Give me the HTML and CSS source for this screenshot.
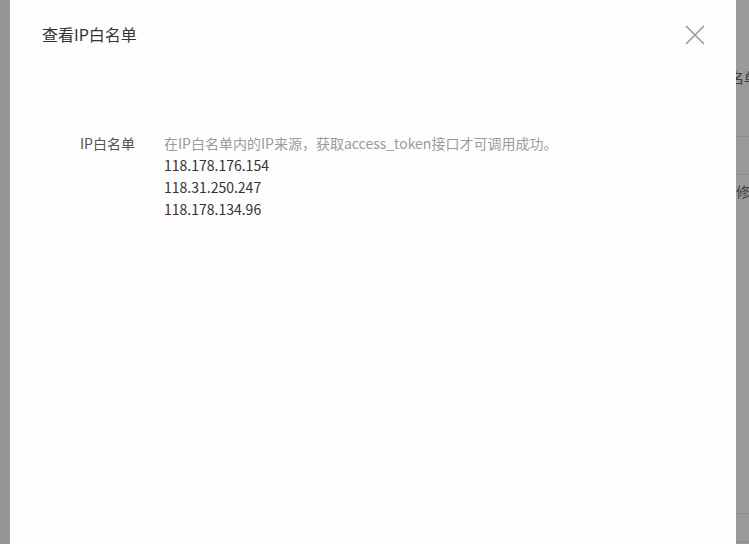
FILE: index.html
```html
<!DOCTYPE html>
<html lang="zh-CN">
<head>
<meta charset="utf-8">
<title>查看IP白名单</title>
<link rel="stylesheet" href="styles.css">
</head>
<body>
<div class="page">
  <div class="bg-col">
    <div class="bg-row bg-head">IP白名单</div>
    <div class="bg-row bg-line1"></div>
    <div class="bg-row bg-line2"></div>
    <div class="bg-row bg-action">修改</div>
    <div class="bg-row bg-line3"></div>
    <div class="bg-row bg-line4"></div>
  </div>
</div>
<div class="mask"></div>
<div class="modal">
  <div class="modal-header">
    <h2 class="modal-title">查看IP白名单</h2>
    <button class="close" aria-label="关闭">
      <svg width="20" height="20" viewBox="0 0 20 20"><path d="M1 1 L19 19 M19 1 L1 19" stroke="#9a9a9a" stroke-width="1.6" fill="none"/></svg>
    </button>
  </div>
  <div class="modal-body">
    <div class="form-row">
      <div class="label">IP白名单</div>
      <div class="value">
        <div class="hint">在IP白名单内的IP来源，获取access_token接口才可调用成功。</div>
        <div class="ip">118.178.176.154</div>
        <div class="ip">118.31.250.247</div>
        <div class="ip">118.178.134.96</div>
      </div>
    </div>
  </div>
</div>
</body>
</html>
```
FILE: styles.css
```css
html, body {
  margin: 0;
  padding: 0;
  width: 749px;
  height: 544px;
  overflow: hidden;
  font-family: "Noto Sans CJK SC", "Noto Sans", sans-serif;
}
body {
  background: #9a9a9a;
  position: relative;
}
.page {
  height: 544px;
  padding-left: 703px;
  box-sizing: border-box;
}
.bg-col {
  display: flex;
  flex-direction: column;
  color: #3a3a3a;
  font-size: 14px;
}
.bg-row {
  white-space: nowrap;
}
.bg-head {
  margin-top: 67px;
  height: 20px;
  line-height: 20px;
}
.bg-line1 {
  margin-top: 49px;
  border-top: 1px solid #8d8d8d;
}
.bg-line2 {
  margin-top: 37px;
  border-top: 1px solid #8d8d8d;
}
.bg-action {
  margin-top: 6px;
  height: 20px;
  line-height: 20px;
  padding-left: 33px;
}
.bg-line3 {
  margin-top: 312px;
  border-top: 1px solid #8d8d8d;
}
.bg-line4 {
  margin-top: 27px;
  border-top: 1px solid #8d8d8d;
}
.mask {
  position: absolute;
  left: 0;
  top: 0;
  width: 10px;
  height: 544px;
  background: #969696;
}
.modal {
  position: absolute;
  left: 10px;
  top: 0;
  width: 726px;
  height: 544px;
  background: #fdfdfd;
}
.modal-header {
  display: flex;
  align-items: center;
  justify-content: space-between;
  padding: 23px 31px 0 32px;
  height: 22px;
}
.modal-title {
  margin: 0;
  font-size: 16px;
  font-weight: normal;
  color: #333;
  line-height: 22px;
}
.close {
  border: 0;
  background: none;
  padding: 0;
  width: 20px;
  height: 20px;
  display: flex;
  margin-top: 2px;
}
.modal-body {
  padding: 87px 0 0 70px;
}
.form-row {
  display: flex;
  font-size: 14px;
  line-height: 22px;
}
.label {
  width: 84px;
  color: #555;
}
.value {
  display: flex;
  flex-direction: column;
}
.hint {
  color: #9b9b9b;
}
.ip {
  color: #333;
}
```
